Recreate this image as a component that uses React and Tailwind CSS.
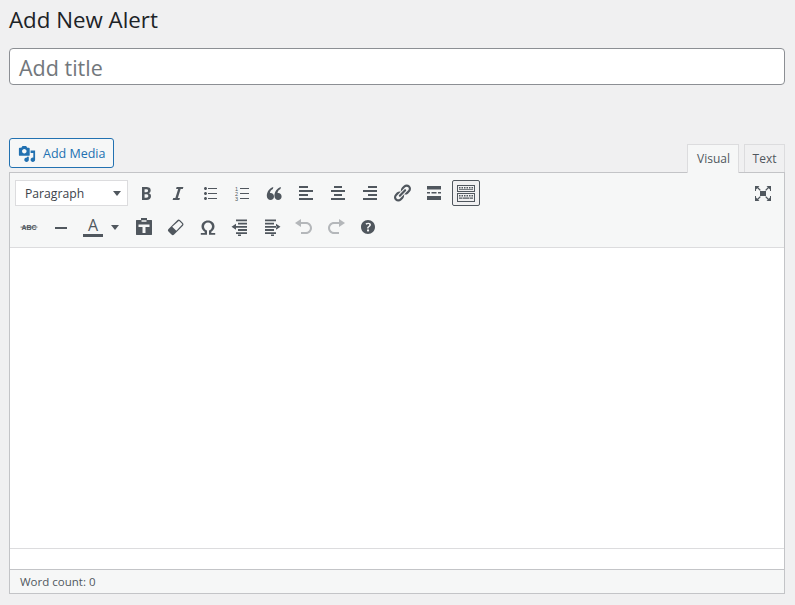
const P = ({ d, className = "w-5 h-5", evenodd }) => (
  <svg viewBox="0 0 20 20" className={className} fill="currentColor">
    <path d={d} fillRule={evenodd ? "evenodd" : "nonzero"} />
  </svg>
);
const S = ({ children }) => (
  <svg viewBox="0 0 20 20" className="w-5 h-5" fill="currentColor">{children}</svg>
);
const Btn = ({ children, active, muted }) => (
  <div className={"w-8 h-[26px] shrink-0 flex items-center justify-center " + (muted ? "text-[#b4b7ba]" : "text-[#50575e]")}>
    {active ? (
      <div className="w-7 h-[26px] flex items-center justify-center border border-[#50575e] rounded-[2px] bg-[#f0f0f1]">{children}</div>
    ) : children}
  </div>
);
const Caret = () => (
  <svg viewBox="0 0 8 5" className="w-2 h-[5px]" fill="#50575e"><path d="M0 0h8L4 5z" /></svg>
);
const d = {
  media: "M13 11V4c0-.55-.45-1-1-1h-1.67L9 1H5L3.67 3H2c-.55 0-1 .45-1 1v7c0 .55.45 1 1 1h10c.55 0 1-.45 1-1zM7 4.5c1.38 0 2.5 1.12 2.5 2.5S8.38 9.5 7 9.5 4.5 8.38 4.5 7 5.62 4.5 7 4.5zM14 6h5v10.5c0 1.38-1.12 2.5-2.5 2.5S14 17.88 14 16.5s1.12-2.5 2.5-2.5c.17 0 .34.02.5.05V9h-3V6zm-4 8.05V13h2v3.500c0 1.38-1.12 2.5-2.5 2.5S7 17.88 7 16.5 8.12 14 9.5 14c.17 0 .34.02.5.05z",
  bold: "M6 4v13h4.54c1.37 0 2.46-.33 3.26-1 .8-.66 1.2-1.58 1.2-2.77 0-.84-.17-1.51-.51-2.01s-.9-.85-1.67-1.03v-.09c.57-.1 1.02-.4 1.36-.9s.51-1.13.51-1.91c0-1.14-.39-1.98-1.17-2.5C12.75 4.26 11.5 4 9.78 4H6zm2.57 5.15V6.26h1.36c.73 0 1.27.11 1.61.32.34.22.51.58.51 1.07 0 .54-.16.92-.47 1.15s-.82.35-1.51.35h-1.5zm0 2.19h1.6c1.44 0 2.16.53 2.16 1.61 0 .6-.17 1.05-.51 1.34s-.86.43-1.57.43H8.57v-3.38z",
  italic: "M14.78 6h-2.13l-2.8 9h2.12l-.62 2H4.6l.62-2h2.14l2.8-9H8.03l.62-2h6.75z",
  ul: "M5.5 7C4.67 7 4 6.33 4 5.5 4 4.68 4.67 4 5.5 4 6.32 4 7 4.68 7 5.5 7 6.33 6.32 7 5.5 7zM8 5h9v1H8V5zm-2.5 7c-.83 0-1.5-.67-1.5-1.5C4 9.68 4.67 9 5.5 9c.82 0 1.5.68 1.5 1.5 0 .83-.68 1.5-1.5 1.5zM8 10h9v1H8v-1zm-2.5 7c-.83 0-1.5-.67-1.5-1.5 0-.82.67-1.5 1.5-1.5.82 0 1.5.68 1.5 1.5 0 .83-.68 1.5-1.5 1.5zM8 15h9v1H8v-1z",
  quote: "M9.300 4C5.500 5.300 2.800 8.700 2.800 12.800c0 2.400 1.600 4.200 3.700 4.200s3.500-1.600 3.500-3.600-1.500-3.500-3.300-3.500c-.4 0-.6 0-.8.1.3-1.700 1.300-3.100 3-3.900zM16.900 4c-3.800 1.300-6.500 4.700-6.500 8.800 0 2.400 1.600 4.200 3.700 4.200s3.500-1.600 3.500-3.600-1.500-3.500-3.300-3.500c-.4 0-.6 0-.8.1.3-1.700 1.300-3.100 3-3.900z",
  left: "M12 5V3H3v2h9zm5 4V7H3v2h14zm-5 4v-2H3v2h9zm5 4v-2H3v2h14z",
  center: "M14 5V3H6v2h8zm3 4V7H3v2h14zm-3 4v-2H6v2h8zm3 4v-2H3v2h14z",
  right: "M17 5V3H8v2h9zm0 4V7H3v2h14zm0 4v-2H8v2h9zm0 4v-2H3v2h14z",
  link: "M17.74 2.76c1.68 1.69 1.68 4.41 0 6.1l-1.53 1.52c-1.12 1.12-2.7 1.47-4.14 1.09l2.62-2.61.76-.77.76-.76c.84-.84.84-2.2 0-3.04-.84-.85-2.2-.85-3.04 0l-.77.76-3.38 3.38c-.37-1.44-.02-3.02 1.1-4.14l1.52-1.53c1.69-1.68 4.42-1.68 6.1 0zM8.59 13.43l5.34-5.34c.42-.42.42-1.1 0-1.52-.44-.43-1.13-.39-1.53 0l-5.33 5.34c-.42.42-.42 1.1 0 1.52.44.43 1.13.39 1.52 0zm-.76 2.29l4.14-4.15c.38 1.44.03 3.02-1.09 4.14l-1.52 1.53c-1.69 1.68-4.41 1.68-6.1 0-1.68-1.68-1.68-4.42 0-6.1l1.53-1.52c1.12-1.12 2.7-1.47 4.14-1.1l-4.14 4.15c-.85.84-.85 2.2 0 3.05.84.84 2.2.84 3.04 0z",
  more: "M3 3h14v3.5H3zM3 9h3v1.5H3zM7.5 9h5v1.5h-5zM14 9h3v1.5h-3zM3 13h14v4H3z",
  undo: "M12 5H7V2L1 6l6 4V7h5c2.2 0 4 1.8 4 4s-1.8 4-4 4H7v2h5c3.3 0 6-2.7 6-6s-2.7-6-6-6z",
  redo: "M8 5h5V2l6 4-6 4V7H8c-2.2 0-4 1.8-4 4s1.8 4 4 4h5v2H8c-3.3 0-6-2.7-6-6s2.7-6 6-6z",
  help: "M17 10c0-3.87-3.14-7-7-7-3.87 0-7 3.13-7 7s3.13 7 7 7c3.86 0 7-3.13 7-7zm-6.3 1.48H9.14v-.43c0-.38.08-.7.24-.98s.46-.57.88-.89c.41-.29.68-.53.81-.71.14-.18.2-.39.2-.62 0-.25-.09-.44-.28-.58-.19-.13-.45-.19-.79-.19-.58 0-1.25.19-2 .57l-.64-1.28c.87-.49 1.8-.74 2.77-.74.81 0 1.45.2 1.92.58.48.39.71.91.71 1.55 0 .43-.09.8-.29 1.11-.19.32-.57.67-1.11 1.06-.38.28-.61.49-.71.63-.1.15-.15.34-.15.57v.35zm-1.47 2.74c-.18-.18-.28-.46-.28-.8 0-.34.09-.6.28-.79.18-.18.45-.28.8-.28.34 0 .61.1.8.28.18.19.28.45.28.79 0 .34-.1.62-.28.8-.19.2-.46.3-.8.3-.35 0-.62-.1-.8-.3z",
  omega: "M2.800 16h3.900v-1.200C4.900 13.700 3.500 11.800 3.500 9.500 3.500 6.200 6.300 3.600 10 3.600s6.500 2.600 6.500 5.900c0 2.300-1.400 4.200-3.200 5.300V16h3.900v1.800h-6.200v-4.200c1.700-.8 3-2.300 3-4.200 0-2.200-1.800-4-4-4s-4 1.800-4 4c0 1.900 1.300 3.400 3 4.200v4.200H2.800z",
  paste: "M7 1h6v2h4.500c.3 0 .5.2.5.5v14c0 .3-.2.5-.5.5h-15c-.3 0-.5-.2-.5-.5v-14c0-.3.2-.5.5-.5H7zM7.500 3.200v1.500h5V3.200zM4.500 7.500V10h4v6h3v-6h4V7.500z",
  eraser: "M11.300 3.200c.8-.8 1.800-.8 2.600-.1l3 3c.8.800.8 1.900 0 2.700l-8.800 8.800c-.8.800-1.800.8-2.600 0l-3-3c-.8-.8-.8-1.900 0-2.700zM12.500 4.200 6.200 9.700l4.100 4.100 5.700-6.100c.3-.3.3-.600 0-.900l-2.600-2.600c-.3-.3-.6-.3-.900 0z",
  outdent: "M6 2.500h11v1.800H6zM8 5.700h9v1.800H8zM8 8.900h9v1.800H8zM8 12.100h9v1.800H8zM6 15.300h11v1.800H6zM8 17.500h3V19H8zM1.500 9.800 6 6.800v6zM5.500 8.900H8v1.800H5.500z",
  indent: "M3 2.500h11v1.800H3zM3 5.700h9v1.800H3zM3 8.900h9v1.800H3zM3 12.100h9v1.800H3zM3 15.300h11v1.800H3zM9 17.500h3V19H9zM18.500 9.800 14 6.800v6zM12 8.900h2.500v1.800H12z",
  dfw: "M7 8h6v5H7zM2 3h4.500L5.200 4.300 7.800 6.900 6.900 7.800 4.300 5.200 3 6.500V8H2zM18 3v5h-1V6.500l-1.300-1.300-2.600 2.600-.9-.9 2.600-2.600L13.500 3zM2 18v-5h1v1.500l1.300 1.300 2.600-2.600.9.9-2.600 2.600L6.500 18zM18 18h-4.500l1.300-1.300-2.600-2.600.9-.9 2.600 2.600 1.300-1.300V13h1z",
};
const Keyboard = () => (
  <svg viewBox="0 0 20 20" className="w-5 h-5" fill="#50575e">
    <path fillRule="evenodd" d="M1 2h18v7H1zM2 3v5h16V3zM1 10h18v9H1zM2 11v7h16v-7z" />
    <path d="M3 4h1.500v1.500H3zM5.500 4H7v1.500H5.500zM8 4h1.500v1.500H8zM10.500 4H12v1.500h-1.500zM13 4h1.500v1.500H13zM15.500 4H17v1.500h-1.500zM3 6.200h14V7H3zM3 12h1.500v1.500H3zM5.500 12H7v1.500H5.500zM8 12h1.500v1.500H8zM10.500 12H12v1.500h-1.500zM13 12h1.500v1.500H13zM15.500 12H17v1.500h-1.500zM3 14.500h3v1.200H3zM6.500 14.500h7v1.200h-7zM14 14.500h3v1.200h-3z" />
  </svg>
);

export default function App() {
  return (
    <div className="w-[795px] h-[605px] overflow-hidden bg-[#f0f0f1] px-[9px] pt-[4px] text-[#50575e]" style={{ fontFamily: '"Open Sans", "Noto Sans", sans-serif' }}>
      <h1 className="h-[31px] text-[22.300px] leading-[31px] text-[#1d2327] font-normal">Add New Alert</h1>
      <div className="mt-[13px] h-[37px] w-[776px] bg-white border border-[#8c8f94] rounded-[4px] pl-[9px] text-[21.500px] leading-[38px] text-[#72777c]">Add title</div>

      <div className="mt-[53px] h-[34px] w-[776px] flex justify-between">
        <div className="h-[30px] w-[105px] border border-[#2271b1] rounded-[3px] bg-[#f6f7f7] text-[#2271b1] flex items-center pl-2 pt-[2px] gap-[7px]">
          <P d={d.media} className="w-[18px] h-[18px] shrink-0" />
          <span className="text-[12.500px] leading-[26px]">Add Media</span>
        </div>
        <div className="flex items-end gap-[5px] mt-[6px] relative z-10">
          <div className="w-[52px] h-[29px] bg-[#f6f7f7] border border-[#dcdcde] border-b-0 text-[12px] text-center leading-[27px] pl-[1px] -mb-[1px]">Visual</div>
          <div className="w-[41px] h-[28px] bg-[#f0f0f1] border border-[#dcdcde] border-b-0 text-[12px] text-center leading-[27px]">Text</div>
        </div>
      </div>

      <div className="h-[422px] w-[776px] border border-[#c3c4c7] flex flex-col">
        <div className="h-[75px] shrink-0 bg-[#f6f7f7] border-b border-[#dcdcde] pt-[7px]">
          <div className="flex items-center pl-[5px] pr-[5px] h-[26px]">
            <div className="w-[113px] h-[26px] shrink-0 bg-white border border-[#dcdcde] flex items-center justify-between pl-[9px] pr-[6px] text-[12.200px] leading-[24px] text-[#3c434a]">
              <span className="pt-[1px]">Paragraph</span><Caret />
            </div>
            <div className="w-[2px] shrink-0" />
            <Btn><P d={d.bold} /></Btn>
            <Btn><P d={d.italic} /></Btn>
            <Btn><P d={d.ul} /></Btn>
            <Btn>
              <S>
                <text x="3" y="7.500" fontSize="5.500" fontFamily="Liberation Sans, sans-serif">1</text>
                <text x="3" y="12.500" fontSize="5.500" fontFamily="Liberation Sans, sans-serif">2</text>
                <text x="3" y="17.500" fontSize="5.500" fontFamily="Liberation Sans, sans-serif">3</text>
                <path d="M8 5h9v1H8zM8 10h9v1H8zM8 15h9v1H8z" />
              </S>
            </Btn>
            <Btn><P d={d.quote} /></Btn>
            <Btn><P d={d.left} /></Btn>
            <Btn><P d={d.center} /></Btn>
            <Btn><P d={d.right} /></Btn>
            <Btn><P d={d.link} /></Btn>
            <Btn><P d={d.more} /></Btn>
            <Btn active><Keyboard /></Btn>
            <div className="ml-auto"><Btn><P d={d.dfw} /></Btn></div>
          </div>
          <div className="flex items-center pl-[3px] h-[26px] mt-[8px]">
            <Btn>
              <S>
                <text x="10" y="12.500" textAnchor="middle" fontSize="7" fontWeight="700" fontFamily="Liberation Sans, sans-serif">ABC</text>
                <path d="M1.500 9.700h17v.8h-17z" />
              </S>
            </Btn>
            <Btn><P d="M4 10h12v2H4z" /></Btn>
            <div className="w-[51px] h-[26px] shrink-0 flex items-center">
              <div className="w-8 flex flex-col items-center">
                <span className="text-[16px] leading-[14px] h-[16px]">A</span>
                <div className="w-5 h-[3px] bg-[#50575e]" />
              </div>
              <div className="ml-[2px]"><Caret /></div>
            </div>
            <Btn><P d={d.paste} evenodd /></Btn>
            <Btn><P d={d.eraser} evenodd /></Btn>
            <Btn><P d={d.omega} /></Btn>
            <Btn><P d={d.outdent} /></Btn>
            <Btn><P d={d.indent} /></Btn>
            <Btn muted><P d={d.undo} /></Btn>
            <Btn muted><P d={d.redo} /></Btn>
            <Btn><P d={d.help} evenodd /></Btn>
          </div>
        </div>
        <div className="h-[300px] shrink-0 bg-white" />
        <div className="h-[21px] shrink-0 bg-white border-t border-[#dcdcde]" />
        <div className="flex-1 bg-[#f6f7f7] border-t border-[#c3c4c7] pl-[10px] pt-[1px] text-[11.500px] leading-[22px]">Word count: 0</div>
      </div>
    </div>
  );
}
